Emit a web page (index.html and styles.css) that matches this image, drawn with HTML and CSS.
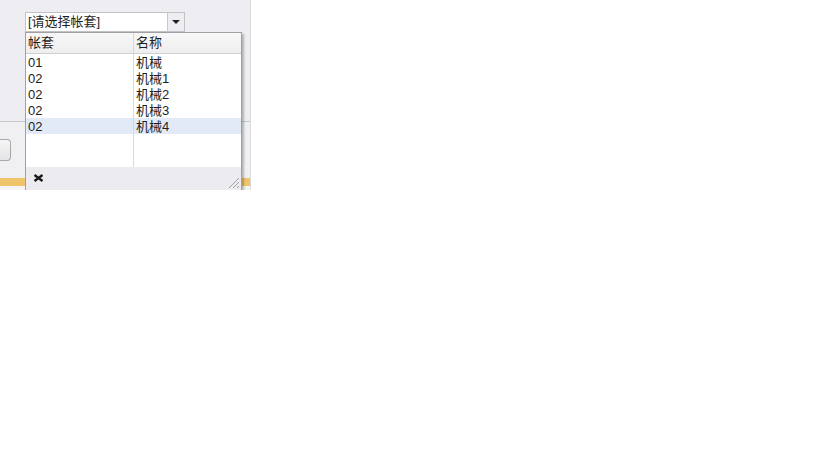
FILE: index.html
```html
<!DOCTYPE html>
<html lang="zh-CN">
<head>
    <meta charset="UTF-8">
    <title>帐套选择</title>
    <link rel="stylesheet" href="styles.css">
</head>
<body>
    <div class="panel">
        <div class="top">
            <div class="combo">
                <span class="combo-text">[请选择帐套]</span>
                <span class="combo-btn"><span class="caret"></span></span>

                <div class="dropdown">
                    <table class="grid">
                        <thead>
                            <tr><th class="col1">帐套</th><th>名称</th></tr>
                        </thead>
                        <tbody>
                            <tr><td class="col1">01</td><td>机械</td></tr>
                            <tr><td class="col1">02</td><td>机械1</td></tr>
                            <tr><td class="col1">02</td><td>机械2</td></tr>
                            <tr><td class="col1">02</td><td>机械3</td></tr>
                            <tr class="selected"><td class="col1">02</td><td>机械4</td></tr>
                            <tr class="filler"><td class="col1"></td><td></td></tr>
                        </tbody>
                    </table>
                    <div class="footer">
                        <svg class="close" width="11" height="8" viewBox="0 0 11 8">
                            <path d="M1.5 1 L9.5 7 M9.5 1 L1.5 7" stroke="#1a1a1a" stroke-width="2.4" fill="none"/>
                        </svg>
                        <span class="grip"></span>
                    </div>
                </div>
            </div>
        </div>
        <div class="bottom">
            <div class="btn"></div>
        </div>
        <div class="bar"></div>
    </div>
</body>
</html>
```

FILE: styles.css
```css
body {
    margin: 0;
    padding: 0;
    background: #ffffff;
    font-family: "Liberation Sans", "Noto Sans CJK SC", sans-serif;
    font-size: 13px;
    color: #1e1e1e;
}

.panel {
    width: 250px;
    border-right: 1px solid #dcdce0;
    background: #eeeef2;
}

.top {
    height: 122px;
    padding-top: 12px;
    box-sizing: border-box;
    border-bottom: 1px solid #c8c8cc;
}

.combo {
    position: relative;
    margin-left: 25px;
    width: 160px;
    height: 20px;
    box-sizing: border-box;
    background: #ffffff;
    border: 1px solid #c2c2c6;
    display: flex;
    align-items: center;
}

.combo-text {
    flex: 1;
    padding-left: 2px;
    line-height: 18px;
}

.combo-btn {
    width: 16px;
    height: 18px;
    background: #eeeef2;
    border-left: 1px solid #c8c8cc;
    display: flex;
    align-items: center;
    justify-content: center;
}

.caret {
    width: 0;
    height: 0;
    border-left: 4px solid transparent;
    border-right: 4px solid transparent;
    border-top: 4px solid #222;
}

.dropdown {
    position: absolute;
    left: -1px;
    top: 19px;
    width: 217px;
    height: 159px;
    box-sizing: border-box;
    background: #ffffff;
    border: 1px solid #a0a0a4;
    box-shadow: 2px 2px 2px rgba(0, 0, 0, 0.25);
    display: flex;
    flex-direction: column;
    z-index: 2;
}

.grid {
    border-collapse: collapse;
    width: 100%;
    flex: 1;
}

.grid th {
    height: 20px;
    padding: 0 0 0 2px;
    line-height: 20px;
    text-align: left;
    font-weight: normal;
    background: linear-gradient(#f8f8f8, #eeeeee);
    border-bottom: 1px solid #d0d0d4;
}

.grid td {
    height: 16px;
    padding: 1px 0 0 2px;
    line-height: 15px;
    box-sizing: border-box;
}

.grid .col1 {
    width: 105px;
    border-right: 1px solid #d8d8dc;
}

.grid .selected td {
    background: #e2eaf8;
}

.grid .filler td {
    height: auto;
}

.footer {
    height: 23px;
    background: #ececf0;
    display: flex;
    align-items: center;
    justify-content: space-between;
    padding-left: 7px;
}

.close {
    display: block;
    margin-bottom: 2px;
}

.grip {
    align-self: flex-end;
    width: 10px;
    height: 10px;
    margin: 0 2px 2px 0;
    background: linear-gradient(135deg, transparent 45%, #a0a0a0 45%, #a0a0a0 52%, transparent 52%, transparent 65%, #a0a0a0 65%, #a0a0a0 72%, transparent 72%, transparent 85%, #a0a0a0 85%, #a0a0a0 92%, transparent 92%);
}

.bottom {
    height: 56px;
    padding-top: 17px;
    box-sizing: border-box;
    background: #f0f0f2;
}

.btn {
    width: 11px;
    height: 22px;
    box-sizing: border-box;
    background: linear-gradient(#f6f6f6, #e4e4e6);
    border: 1px solid #a8a8ac;
    border-left: none;
    border-radius: 0 4px 4px 0;
}

.bar {
    height: 8px;
    background: #f0c46a;
    border-bottom: 4px solid #f4f4f4;
}
```
